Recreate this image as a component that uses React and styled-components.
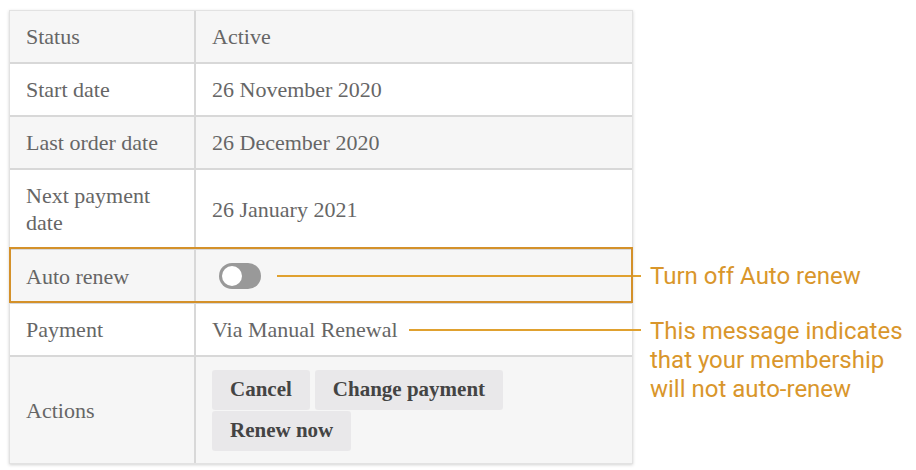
import React from 'react';
import styled, { createGlobalStyle } from 'styled-components';

const Global = createGlobalStyle`
  body {
    margin: 0;
    background: #fff;
  }
`;

const Page = styled.div`
  display: flex;
  align-items: flex-start;
  padding: 10px 0 0 9px;
  width: 916px;
  height: 470px;
  box-sizing: border-box;
`;

const Table = styled.div`
  width: 622px;
  border: 1px solid #e2e2e2;
  box-shadow: 0 1px 3px rgba(0, 0, 0, 0.18);
  font-family: "Liberation Serif", serif;
  font-size: 22px;
  color: #666;
`;

const Row = styled.div`
  position: relative;
  display: grid;
  grid-template-columns: 186px 1fr;
  min-height: ${p => p.h}px;
  background: ${p => (p.shade ? '#f6f6f6' : '#fff')};
  border-top: ${p => (p.first ? 'none' : '2px solid #d8d8d8')};
  box-sizing: border-box;
  outline: ${p => (p.mark ? '2px solid #d4912a' : 'none')};
  outline-offset: -1px;
  z-index: ${p => (p.mark ? 1 : 0)};
`;

const Label = styled.div`
  display: flex;
  align-items: center;
  padding: 0 16px;
  border-right: 2px solid #d8d8d8;
  line-height: 27px;
`;

const Value = styled.div`
  display: flex;
  align-items: center;
  padding: 0 16px;
  line-height: 27px;
`;

const ActionsCell = styled(Value)`
  flex-wrap: wrap;
  align-content: center;
  gap: 1px 5px;
  padding: 0 120px 0 16px;
`;

const Button = styled.button`
  font-family: "Liberation Serif", serif;
  font-weight: bold;
  font-size: 21px;
  color: #444;
  background: #e9e8ea;
  border: none;
  border-radius: 3px;
  height: 40px;
  padding: 0 18px;
`;

const Toggle = styled.span`
  display: inline-flex;
  align-items: center;
  width: 42px;
  height: 26px;
  margin-left: 7px;
  border-radius: 13px;
  background: #999;
  padding: 0 3px;
  box-sizing: border-box;

  &::before {
    content: '';
    width: 20px;
    height: 20px;
    border-radius: 50%;
    background: #fff;
  }
`;

const Leader = styled.span`
  flex: 1;
  height: 2px;
  background: #e0a12f;
  margin-left: ${p => p.gap}px;
  margin-right: -25px;
`;

const Notes = styled.div`
  display: flex;
  flex-direction: column;
  gap: 26px;
  padding: 252px 0 0 17px;
  font-family: Roboto, sans-serif;
  font-size: 24px;
  line-height: 29px;
  color: #d9962b;
  white-space: nowrap;
`;

const Note = styled.div``;

export default function App() {
  return (
    <>
      <Global />
      <Page>
        <Table>
          <Row first shade h={51}>
            <Label>Status</Label>
            <Value>Active</Value>
          </Row>
          <Row h={53}>
            <Label>Start date</Label>
            <Value>26 November 2020</Value>
          </Row>
          <Row shade h={53}>
            <Label>Last order date</Label>
            <Value>26 December 2020</Value>
          </Row>
          <Row h={80}>
            <Label>Next payment date</Label>
            <Value>26 January 2021</Value>
          </Row>
          <Row shade mark h={54}>
            <Label>Auto renew</Label>
            <Value>
              <Toggle />
              <Leader gap={16} />
            </Value>
          </Row>
          <Row h={53}>
            <Label>Payment</Label>
            <Value>
              Via Manual Renewal
              <Leader gap={11} />
            </Value>
          </Row>
          <Row shade h={108}>
            <Label>Actions</Label>
            <ActionsCell>
              <Button>Cancel</Button>
              <Button>Change payment</Button>
              <Button>Renew now</Button>
            </ActionsCell>
          </Row>
        </Table>
        <Notes>
          <Note>Turn off Auto renew</Note>
          <Note>
            This message indicates
            <br />
            that your membership
            <br />
            will not auto-renew
          </Note>
        </Notes>
      </Page>
    </>
  );
}
